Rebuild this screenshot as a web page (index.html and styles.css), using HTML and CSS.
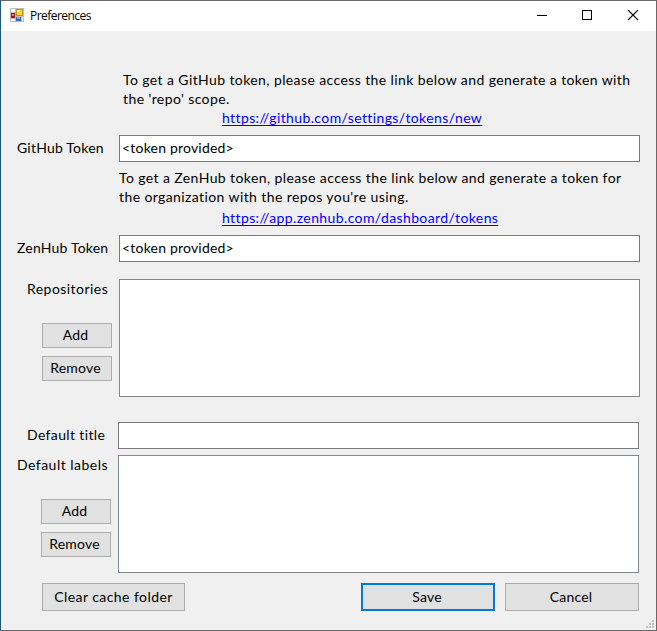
FILE: index.html
```html
<!DOCTYPE html>
<html lang="en">
<head>
<meta charset="utf-8">
<title>Preferences</title>
<link rel="stylesheet" href="styles.css">
</head>
<body>
<div class="window">
  <header class="titlebar">
    <svg class="app-icon" width="14" height="14" viewBox="0 0 14 14" shape-rendering="crispEdges">
      <path fill="#bdbdbd" d="M0 0h14v14H0z"/>
      <path fill="#fff" d="M1 1h4v3H1zM1 11h4v2H1zM12 9h1v4h-1z"/>
      <path fill="#a31515" d="M1 5h4v5H1z"/><path fill="#e88378" d="M2 6h2v2H2z"/>
      <path fill="#c79516" d="M6 1h7v7H6z"/><path fill="#ffd23c" d="M7 2h5v5H7z"/><path fill="#ffe99a" d="M7 2h3v2H7z"/>
      <path fill="#2f66c4" d="M6 9h5v4H6z"/><path fill="#79aaf5" d="M7 9h3v2H7z"/>
    </svg>
    <span class="caption">Preferences</span>
    <svg class="controls" width="102" height="12" viewBox="0 0 102 12">
      <path d="M0 5.500h10M45.500 0.500h9v9h-9z" fill="none" stroke="#000" shape-rendering="crispEdges"/>
      <path d="M91 0l10 10M101 0L91 10" fill="none" stroke="#000" stroke-width="1.100"/>
    </svg>
  </header>
  <main class="form">
    <p class="hint hint-github">To get a GitHub token, please access the link below and generate a token with<br>the 'repo' scope.</p>
    <a class="link link-github">https://github.com/settings/tokens/new</a>
    <div class="row row-github"><label class="label">GitHub Token</label><div class="field">&lt;token provided&gt;</div></div>
    <p class="hint hint-zenhub">To get a ZenHub token, please access the link below and generate a token for<br>the organization with the repos you're using.</p>
    <a class="link link-zenhub">https://app.zenhub.com/dashboard/tokens</a>
    <div class="row row-zenhub"><label class="label">ZenHub Token</label><div class="field">&lt;token provided&gt;</div></div>
    <div class="row row-repos">
      <div class="side"><label class="label">Repositories</label><button class="btn small add">Add</button><button class="btn small remove">Remove</button></div>
      <div class="list"></div>
    </div>
    <div class="defaults">
      <div class="row row-title"><label class="label">Default title</label><div class="field"></div></div>
      <div class="row row-labels">
        <div class="side"><label class="label">Default labels</label><button class="btn small add">Add</button><button class="btn small remove">Remove</button></div>
        <div class="list"></div>
      </div>
    </div>
    <footer class="actions"><button class="btn clear">Clear cache folder</button><button class="btn save">Save</button><button class="btn cancel">Cancel</button></footer>
  </main>
  <svg class="grip" width="8" height="8" viewBox="0 0 8 8" shape-rendering="crispEdges"><path fill="#bfbfbf" d="M6 0h2v2H6zM3 3h2v2H3zM6 3h2v2H6zM0 6h2v2H0zM3 6h2v2H3zM6 6h2v2H6z"/></svg>
</div>
</body>
</html>
```
FILE: styles.css
```css
* { box-sizing: border-box; }
body { margin: 0; }
.window {
  position: relative;
  width: 657px;
  height: 631px;
  border: 1px solid #6b6769;
  border-left-color: #1c5878;
  background: #f0f0f0;
  color: #000;
  font: 14px/19px Lato, Carlito, sans-serif;
  letter-spacing: 0.2px;
  overflow: hidden;
}
.titlebar { display: flex; align-items: center; height: 30px; padding: 0 17px 0 9px; background: #fff; }
.app-icon { margin-bottom: 2px; }
.caption { margin-left: 6px; font: 12px/16px "Open Sans", sans-serif; letter-spacing: -0.55px; }
.controls { margin-left: auto; }
.form { padding-top: 39px; }
.hint { margin: 0 0 0 122px; white-space: nowrap; letter-spacing: 0.4px; }
.hint-zenhub { margin: 6px 0 0 118px; }
.link { display: block; width: max-content; height: 19px; margin-left: 221px; color: #00f; letter-spacing: 0.39px; text-decoration: underline; text-underline-offset: 2px; text-decoration-thickness: 1px; text-decoration-skip-ink: none; }
.link-zenhub { margin-top: 2px; }
.row { display: grid; grid-template-columns: 118px 521px; white-space: nowrap; }
.row-github, .row-zenhub { margin-top: 8px; }
.row-github .label, .row-zenhub .label { padding: 3px 0 0 16px; }
.field { height: 27px; padding: 2px; border: 1px solid #7a7a7a; background: #fff; }
.row-repos { margin-top: 17px; }
.list { height: 118px; border: 1px solid #828790; background: #fff; }
.side { display: flex; flex-direction: column; align-items: flex-start; }
.side .label { margin-left: 26px; letter-spacing: 0.45px; }
.btn { padding: 0 0 2px; border: 1px solid #adadad; border-radius: 0; background: #e1e1e1; color: #000; font: inherit; letter-spacing: inherit; }
.small { width: 70px; height: 25px; margin-left: 41px; padding-right: 3px; }
.add { margin-top: 25px; }
.remove { margin-top: 8px; }
.defaults { margin: 25px 0 0 -1px; }
.row-title .label { padding: 3px 0 0 27px; letter-spacing: 0.36px; }
.row-labels { margin-top: 6px; }
.row-labels .side .label { margin-left: 17px; letter-spacing: 0.48px; }
.actions { display: flex; margin: 10px 0 0 41px; }
.actions .btn { height: 28px; }
.actions .clear { width: 143px; letter-spacing: 0.43px; }
.actions .save { width: 134px; margin-left: 176px; border: 2px solid #0078d7; padding-right: 2px; }
.actions .cancel { width: 134px; margin-left: 10px; padding-right: 2px; }
.grip { position: absolute; right: 2px; bottom: 2px; }
```
